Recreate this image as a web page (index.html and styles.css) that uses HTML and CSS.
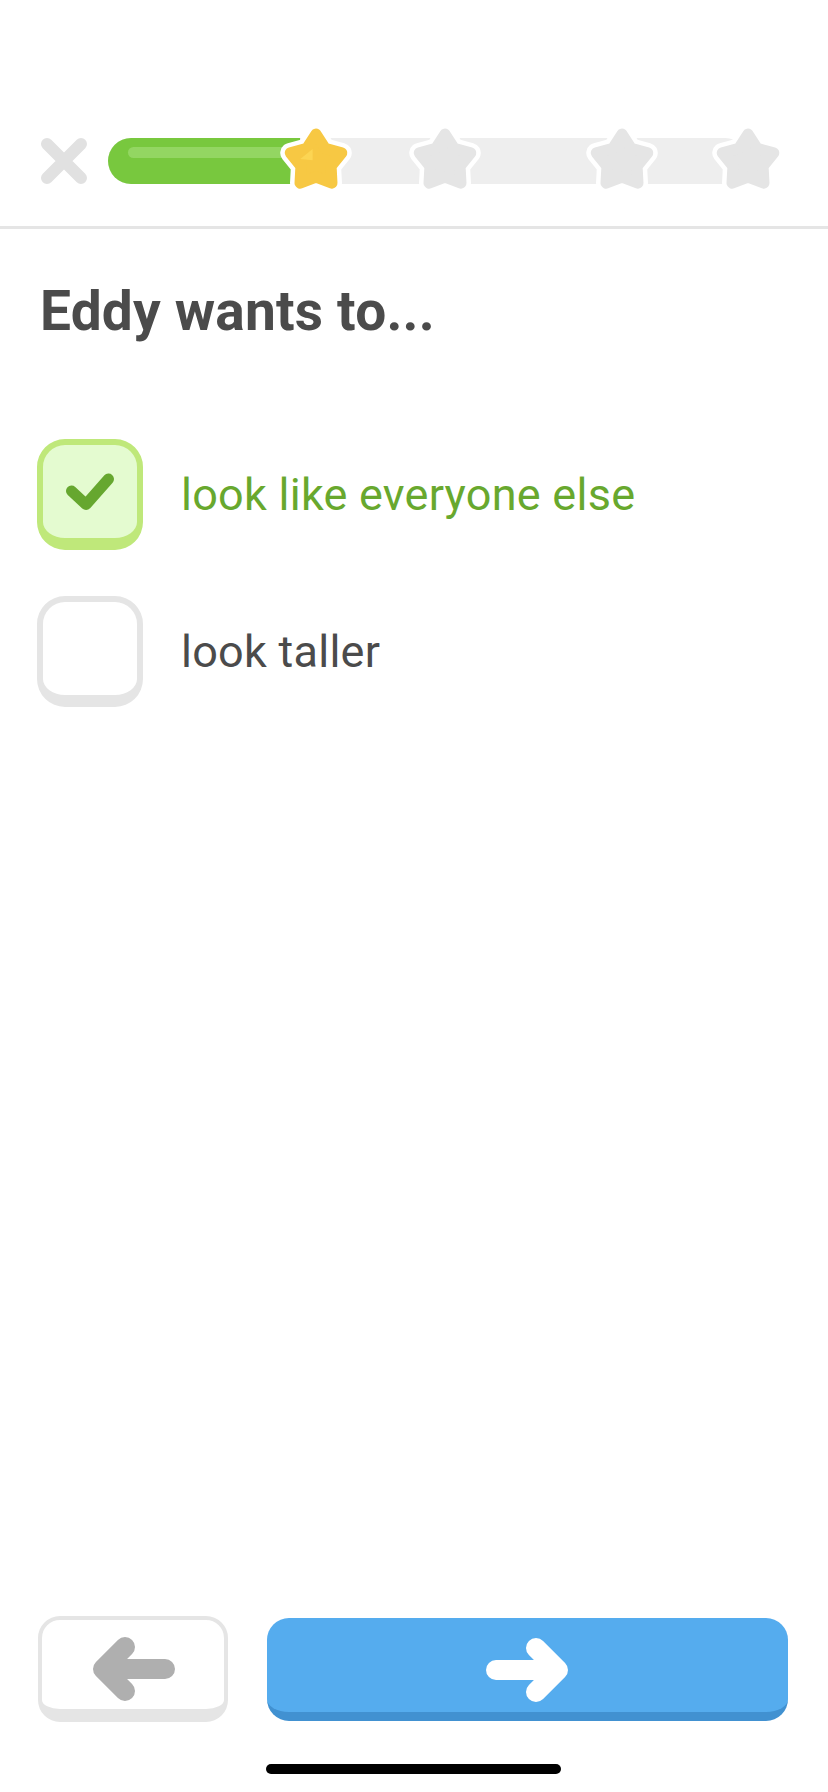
FILE: index.html
```html
<!DOCTYPE html>
<html>
<head>
    <meta charset="UTF-8">
    <title>Eddy wants to...</title>
    <link rel="stylesheet" href="styles.css">
</head>
<body>
<div class="page">
    <div class="topbar">
        <svg class="close" width="48" height="48" viewBox="0 0 48 48">
            <path d="M7 7L41 41M41 7L7 41" stroke="#e1e1e1" stroke-width="12" stroke-linecap="round" fill="none"/>
        </svg>
        <div class="progress">
            <div class="progress-fill" style="width: 30%"></div>

            <svg class="star gold" style="left: 32.5%" viewBox="0 0 64 64">
                <path class="star-edge" d="M32 10L40.2 22.7 54.8 26.6 45.3 38.3 46.1 53.4 32 48 17.9 53.4 18.7 38.3 9.2 26.6 23.8 22.7Z"/>
                <path class="star-body" d="M32 10L40.2 22.7 54.8 26.6 45.3 38.3 46.1 53.4 32 48 17.9 53.4 18.7 38.3 9.2 26.6 23.8 22.7Z"/>
                <path class="star-shine" d="M29 23L29 33 18 32Z"/>
            </svg>
            <svg class="star" style="left: 52.7%" viewBox="0 0 64 64">
                <path class="star-edge" d="M32 10L40.2 22.7 54.8 26.6 45.3 38.3 46.1 53.4 32 48 17.9 53.4 18.7 38.3 9.2 26.6 23.8 22.7Z"/>
                <path class="star-body" d="M32 10L40.2 22.7 54.8 26.6 45.3 38.3 46.1 53.4 32 48 17.9 53.4 18.7 38.3 9.2 26.6 23.8 22.7Z"/>
            </svg>
            <svg class="star" style="left: 80.3%" viewBox="0 0 64 64">
                <path class="star-edge" d="M32 10L40.2 22.7 54.8 26.6 45.3 38.3 46.1 53.4 32 48 17.9 53.4 18.7 38.3 9.2 26.6 23.8 22.7Z"/>
                <path class="star-body" d="M32 10L40.2 22.7 54.8 26.6 45.3 38.3 46.1 53.4 32 48 17.9 53.4 18.7 38.3 9.2 26.6 23.8 22.7Z"/>
            </svg>
            <svg class="star" style="left: 100%" viewBox="0 0 64 64">
                <path class="star-edge" d="M32 10L40.2 22.7 54.8 26.6 45.3 38.3 46.1 53.4 32 48 17.9 53.4 18.7 38.3 9.2 26.6 23.8 22.7Z"/>
                <path class="star-body" d="M32 10L40.2 22.7 54.8 26.6 45.3 38.3 46.1 53.4 32 48 17.9 53.4 18.7 38.3 9.2 26.6 23.8 22.7Z"/>
            </svg>
        </div>
    </div>

    <div class="content">
        <h1 class="title">Eddy wants to...</h1>
        <ul class="options">
            <li class="option checked">
                <span class="box">
                    <svg width="52" height="42" viewBox="0 0 52 42">
                        <path d="M7.5 20L22 33.5 44.5 8" stroke="#66a72f" stroke-width="11" stroke-linecap="round" stroke-linejoin="round" fill="none"/>
                    </svg>
                </span>
                <span class="label">look like everyone else</span>
            </li>
            <li class="option">
                <span class="box"></span>
                <span class="label">look taller</span>
            </li>
        </ul>
    </div>

    <div class="footer">
        <div class="buttons">
            <button class="btn btn-back">
                <svg width="84" height="64" viewBox="0 0 84 64">
                    <path d="M74 32H14M34 10L12 32 34 54" stroke="#afafaf" stroke-width="20" stroke-linecap="round" stroke-linejoin="round" fill="none"/>
                </svg>
            </button>
            <button class="btn btn-next">
                <svg width="84" height="64" viewBox="0 0 84 64">
                    <path d="M10 32H70M50 10L72 32 50 54" stroke="#ffffff" stroke-width="20" stroke-linecap="round" stroke-linejoin="round" fill="none"/>
                </svg>
            </button>
        </div>
        <div class="home-bar"></div>
    </div>
</div>
</body>
</html>
```

FILE: styles.css
```css
* {
    margin: 0;
    padding: 0;
    box-sizing: border-box;
}

body {
    background: #fff;
    font-family: Roboto, "Liberation Sans", sans-serif;
    color: #4b4b4b;
}

ul, li {
    list-style: none;
}

.page {
    display: flex;
    flex-direction: column;
    width: 828px;
    height: 1792px;
}

/* top bar */
.topbar {
    display: flex;
    align-items: center;
    padding: 137px 40px 41px;
    border-bottom: 3px solid #e5e5e5;
}

.close {
    display: block;
    flex: none;
}

.progress {
    position: relative;
    margin-left: 20px;
    width: 640px;
    height: 46px;
    border-radius: 23px;
    background: #eeeeee;
}

.progress-fill {
    position: relative;
    height: 100%;
    border-radius: 23px 0 0 23px;
    background: #78c83e;
}

.progress-fill:after {
    position: absolute;
    top: 9px;
    left: 20px;
    right: 12px;
    height: 11px;
    border-radius: 6px;
    background: #93d662;
    content: "";
}

.star {
    position: absolute;
    top: -15px;
    width: 72px;
    height: 72px;
    transform: translateX(-50%);
}

.star-edge {
    fill: #fff;
    stroke: #fff;
    stroke-width: 18;
    stroke-linejoin: round;
}

.star-body {
    fill: #e5e5e5;
    stroke: #e5e5e5;
    stroke-width: 10;
    stroke-linejoin: round;
}

.gold .star-body {
    fill: #f7c843;
    stroke: #f7c843;
}

.star-shine {
    fill: #fcd553;
}

/* question */
.content {
    flex: 1;
    padding: 0 40px 0 37px;
}

.title {
    margin: 50px 0 96px 3px;
    font-size: 55px;
    line-height: 64px;
    font-weight: 700;
    letter-spacing: 0.2px;
    color: #4b4b4b;
}

.option {
    display: flex;
    align-items: center;
    margin-bottom: 46px;
}

.box {
    display: flex;
    align-items: center;
    justify-content: center;
    flex: none;
    width: 106px;
    height: 111px;
    border: 6px solid #e5e5e5;
    border-bottom-width: 12px;
    border-radius: 28px;
    background: #fff;
}

.label {
    margin-left: 38px;
    font-size: 45px;
    line-height: 52px;
    letter-spacing: 0.25px;
    color: #4b4b4b;
}

.checked .box {
    border-color: #bfe87a;
    background: #e4fbd0;
}

.checked .label {
    color: #68a82e;
}

/* bottom buttons */
.footer {
    padding: 0 40px 18px 38px;
}

.buttons {
    display: flex;
    gap: 39px;
    height: 106px;
}

.btn {
    display: flex;
    align-items: center;
    justify-content: center;
    border: none;
    border-radius: 22px;
    cursor: pointer;
}

.btn-back {
    width: 190px;
    border: 4px solid #e5e5e5;
    border-bottom-width: 13px;
    background: #fff;
    padding-top: 9px;
}

.btn-next {
    flex: 1;
    margin-top: 2px;
    height: 103px;
    border-bottom: 9px solid #4191d1;
    background: #55acee;
    padding-top: 9px;
}

.home-bar {
    margin: 42px auto 0;
    width: 295px;
    height: 10px;
    border-radius: 5px;
    background: #000;
}
```
